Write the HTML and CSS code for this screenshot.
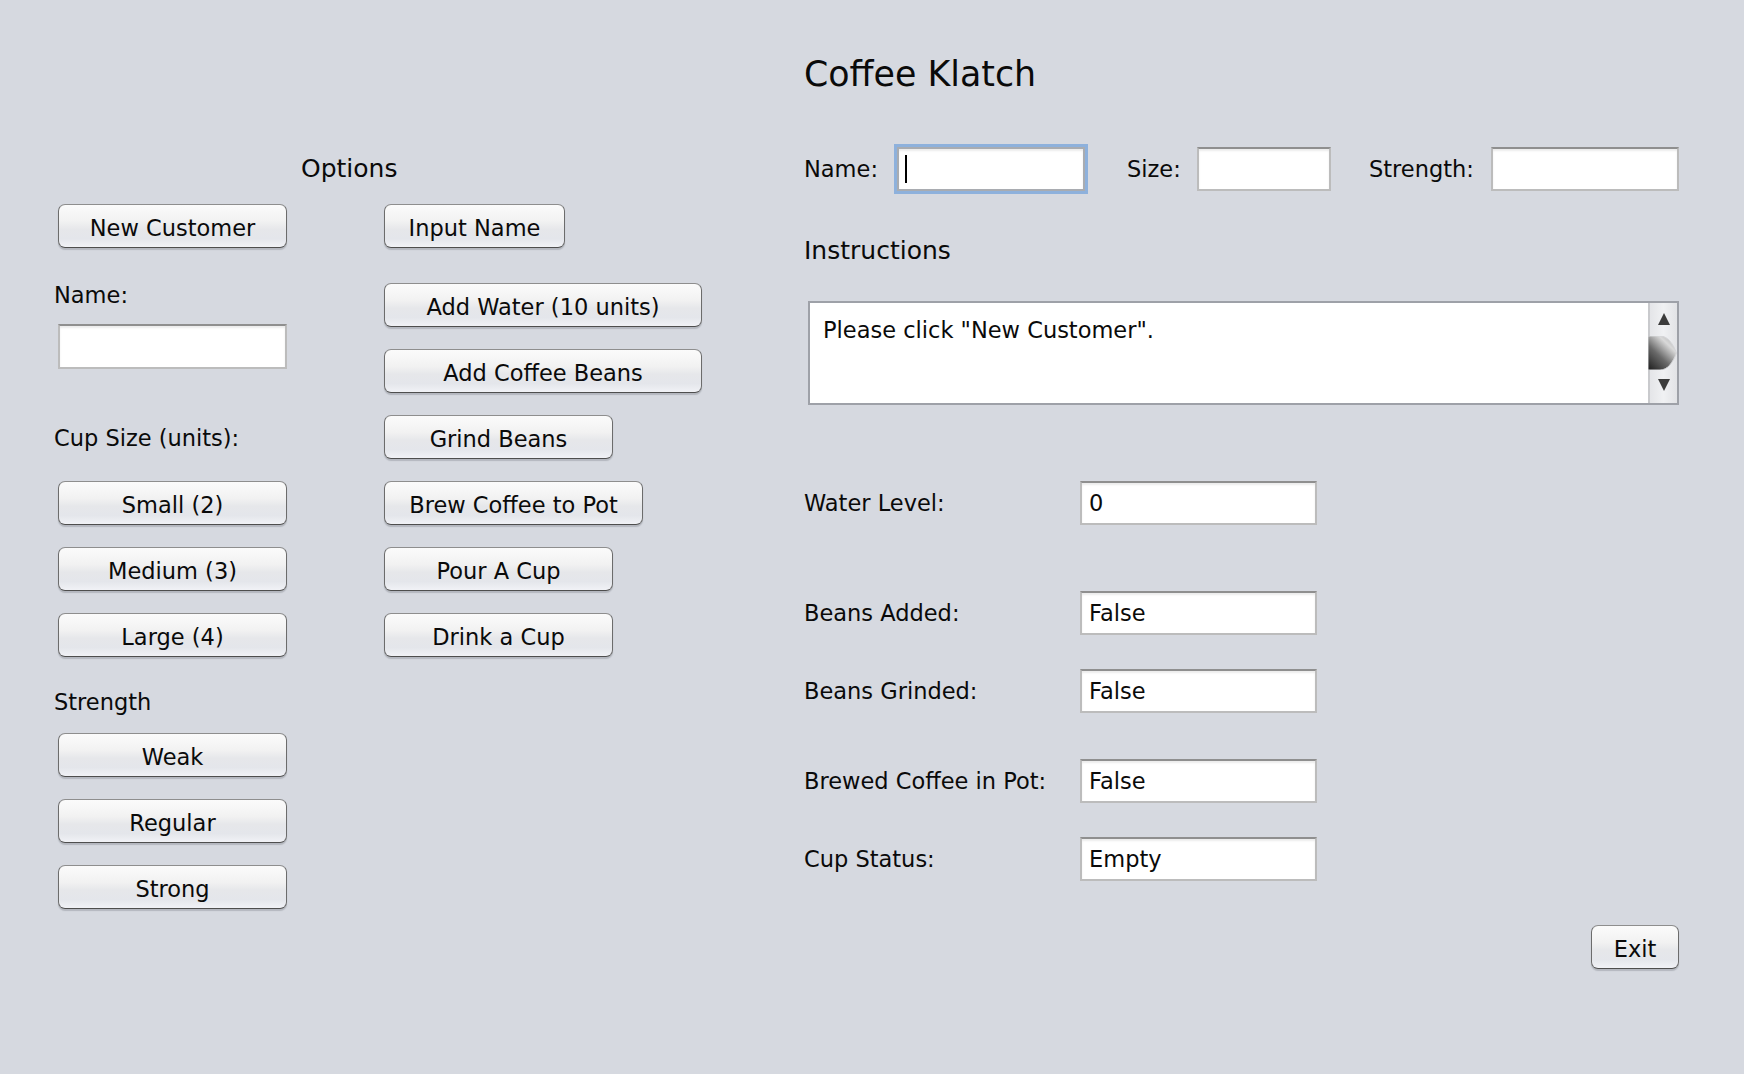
FILE: index.html
```html
<!DOCTYPE html>
<html>
<head>
<meta charset="utf-8">
<title>Coffee Klatch</title>
<link rel="stylesheet" href="styles.css">
</head>
<body>
<div class="app">
  <section class="options">
    <h2 class="options-title">Options</h2>
    <div class="options-cols">
      <div class="col col-a">
        <button class="btn w229">New Customer</button>
        <div class="lbl lbl-name">Name:</div>
        <div class="field w229 f-left-name"></div>
        <div class="lbl lbl-cup">Cup Size (units):</div>
        <button class="btn w229 first-after-lbl">Small (2)</button>
        <button class="btn w229 stack">Medium (3)</button>
        <button class="btn w229 stack">Large (4)</button>
        <div class="lbl lbl-strength">Strength</div>
        <button class="btn w229 after-strength">Weak</button>
        <button class="btn w229 stack">Regular</button>
        <button class="btn w229 stack">Strong</button>
      </div>
      <div class="col col-b">
        <button class="btn w181">Input Name</button>
        <button class="btn w318 after-input">Add Water (10 units)</button>
        <button class="btn w318 stack">Add Coffee Beans</button>
        <button class="btn w229 stack">Grind Beans</button>
        <button class="btn w259 stack">Brew Coffee to Pot</button>
        <button class="btn w229 stack">Pour A Cup</button>
        <button class="btn w229 stack">Drink a Cup</button>
      </div>
    </div>
  </section>

  <section class="main">
    <h1 class="title">Coffee Klatch</h1>

    <div class="top-row">
      <div class="tlbl tl-name">Name:</div>
      <div class="field tf-name focused"><span class="caret"></span></div>
      <div class="tlbl tl-size">Size:</div>
      <div class="field tf-size"></div>
      <div class="tlbl tl-strength">Strength:</div>
      <div class="field tf-strength"></div>
    </div>

    <h2 class="instr-title">Instructions</h2>

    <div class="textarea">
      <div class="textarea-text">Please click "New Customer".</div>
      <div class="scrollbar">
        <svg class="arrow arrow-up" width="14" height="14" viewBox="0 0 14 14"><path d="M7 1 L13 13 H1 Z" fill="#3c3c3c"/></svg>
        <svg class="thumb" width="29" height="34" viewBox="0 0 29 34">
          <defs>
            <linearGradient id="tg" x1="0" y1="1" x2="0.8" y2="0">
              <stop offset="0" stop-color="#1c1c1c"/>
              <stop offset="0.45" stop-color="#6a6a6a"/>
              <stop offset="0.8" stop-color="#d9d9d9"/>
              <stop offset="1" stop-color="#b5b5b5"/>
            </linearGradient>
          </defs>
          <path d="M0 0 H12 C20 0 25 8 28.5 17 C25 26 20 34 12 34 H0 Z" fill="url(#tg)" stroke="#d4d5d8" stroke-width="1"/>
        </svg>
        <svg class="arrow arrow-down" width="14" height="14" viewBox="0 0 14 14"><path d="M1 1 H13 L7 13 Z" fill="#3c3c3c"/></svg>
      </div>
    </div>

    <div class="status">
      <div class="srow sr-water">
        <div class="slbl">Water Level:</div>
        <div class="field sfield">0</div>
      </div>
      <div class="srow sr-added">
        <div class="slbl">Beans Added:</div>
        <div class="field sfield">False</div>
      </div>
      <div class="srow sr-grinded">
        <div class="slbl">Beans Grinded:</div>
        <div class="field sfield">False</div>
      </div>
      <div class="srow sr-brewed">
        <div class="slbl">Brewed Coffee in Pot:</div>
        <div class="field sfield">False</div>
      </div>
      <div class="srow sr-cup">
        <div class="slbl">Cup Status:</div>
        <div class="field sfield">Empty</div>
      </div>
    </div>

    <div class="exit-row">
      <button class="btn exit">Exit</button>
    </div>
  </section>
</div>
</body>
</html>
```

FILE: styles.css
```css
* { box-sizing: border-box; }

html, body {
  margin: 0;
  padding: 0;
  background: #d6d9e0;
}

body {
  font-family: "DejaVu Sans", Verdana, sans-serif;
  font-size: 22.5px;
  color: #0a0a0a;
  width: 1744px;
  height: 1074px;
  overflow: hidden;
}

/* ---------- buttons ---------- */
.btn {
  height: 44px;
  padding: 3px 0 0 0;
  font-family: inherit;
  font-size: 22.5px;
  color: #0a0a0a;
  text-align: center;
  white-space: nowrap;
  border: 1.5px solid #6c6c6c;
  border-top-color: #8e8e8e;
  border-bottom-color: #4e4e4e;
  border-radius: 7px;
  background: linear-gradient(#fbfbfb 0%, #f2f2f2 38%, #e6e7ea 58%, #e4e6eb 80%, #f1f2f6 100%);
  box-shadow: 0 2px 1px rgba(60, 64, 75, 0.22);
}

.w181 { width: 181px; }
.w229 { width: 229px; }
.w259 { width: 259px; }
.w318 { width: 318px; }

/* ---------- text fields ---------- */
.field {
  background: #ffffff;
  border: 2px solid #bcbcbc;
  border-top-color: #8f8f8f;
  box-shadow: inset 0 2px 2px rgba(0, 0, 0, 0.08);
  height: 44px;
  display: flex;
  align-items: center;
  padding-left: 7px;
  white-space: nowrap;
}

.focused {
  border-color: #a9acb1;
  box-shadow: 0 0 0 3px #8eb1dc, inset 0 2px 2px rgba(0, 0, 0, 0.08);
}

.caret {
  display: block;
  width: 2px;
  height: 28px;
  background: #000;
  margin-left: -1px;
}

.app {
  display: flex;
  padding: 54px 0 0 54px;
}

/* ---------- left: options ---------- */
.options {
  width: 750px;
  flex: none;
}

.options-title {
  margin: 100px 0 0 0;
  padding-left: 247px;
  font-size: 25px;
  font-weight: normal;
  line-height: 30px;
}

.options-cols {
  display: flex;
  margin-top: 20px;
}

.col {
  display: flex;
  flex-direction: column;
  align-items: flex-start;
}

.col-a { width: 330px; flex: none; }

.lbl {
  line-height: 26px;
  white-space: nowrap;
}
.lbl-name { margin-top: 34px; }
.lbl-cup { margin-top: 56px; }
.lbl-strength { margin-top: 32px; }

.col-a .btn, .col-a .field { margin-left: 4px; }

.col .f-left-name { margin-top: 16px; height: 45px; }
.col .first-after-lbl { margin-top: 30px; }
.col .after-strength { margin-top: 18px; }
.col .stack { margin-top: 22px; }
.col .after-input { margin-top: 35px; }

/* ---------- right: main ---------- */
.main {
  width: 875px;
  flex: none;
  display: flex;
  flex-direction: column;
}

.title {
  margin: 0;
  font-size: 34.8px;
  font-weight: normal;
  line-height: 40px;
}

.top-row {
  display: flex;
  align-items: center;
  margin-top: 53px;
  height: 44px;
}

.tlbl { white-space: nowrap; }
.tl-name { width: 93px; }
.tf-name { width: 188px; }
.tl-size { width: 70px; margin-left: 42px; }
.tf-size { width: 134px; }
.tl-strength { width: 122px; margin-left: 38px; }
.tf-strength { width: 188px; }

.instr-title {
  margin: 45px 0 0 0;
  font-size: 25px;
  font-weight: normal;
  line-height: 30px;
}

.textarea {
  margin: 35px 0 0 4px;
  width: 871px;
  height: 104px;
  border: 2px solid #9ea1a8;
  background: #ffffff;
  display: flex;
}

.textarea-text {
  flex: 1;
  padding: 14px 0 0 13px;
  line-height: 26px;
}

.scrollbar {
  width: 29px;
  flex: none;
  border-left: 2px solid #c9cacd;
  background: linear-gradient(90deg, #e4e5e8, #f0f1f3 50%, #e2e3e6);
  display: flex;
  flex-direction: column;
  align-items: center;
}

.arrow-up { margin-top: 9px; }
.thumb { margin-top: 10px; align-self: flex-start; margin-left: -2px; }
.arrow-down { margin-top: 8px; }

.status {
  margin-top: 76px;
  display: flex;
  flex-direction: column;
}

.srow {
  display: flex;
  align-items: center;
  height: 44px;
}

.slbl { width: 276px; white-space: nowrap; }
.sfield { width: 237px; }

.sr-added { margin-top: 66px; }
.sr-grinded { margin-top: 34px; }
.sr-brewed { margin-top: 46px; }
.sr-cup { margin-top: 34px; }

.exit-row {
  display: flex;
  justify-content: flex-end;
  margin-top: 44px;
}

.exit { width: 88px; }
```
